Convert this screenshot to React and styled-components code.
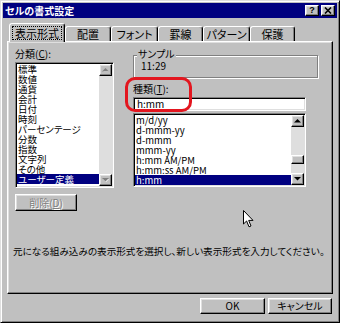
import styled, { createGlobalStyle, css } from "styled-components";

const GlobalStyle = createGlobalStyle`
  html, body {
    margin: 0;
    padding: 0;
    background: #c0c0c0;
  }
  body {
    font-family: "Noto Sans CJK JP", "Noto Sans", sans-serif;
    font-feature-settings: "palt";
    color: #000;
  }
`;

const raised = css`
  border-style: solid;
  border-width: 1px;
  border-color: #fff #000 #000 #fff;
  box-shadow: inset -1px -1px 0 #808080, inset 1px 1px 0 #dfdfdf;
`;

const sunken = css`
  border-style: solid;
  border-width: 1px;
  border-color: #808080 #fff #fff #808080;
  box-shadow: inset 1px 1px 0 #000, inset -1px -1px 0 #dfdfdf;
`;

const Dialog = styled.div`
  position: relative;
  width: 340px;
  height: 323px;
  box-sizing: border-box;
  padding: 2px;
  background: #c0c0c0;
  border-style: solid;
  border-width: 1px;
  border-color: #dfdfdf #000 #000 #dfdfdf;
  box-shadow: inset 1px 1px 0 #fff, inset -1px -1px 0 #808080;
  display: flex;
  flex-direction: column;
`;

const TitleBar = styled.div`
  height: 15px;
  background: #000080;
  display: flex;
  align-items: center;
  padding: 0 2px;
  gap: 1px;
`;

const Title = styled.div`
  flex: 1;
  color: #fff;
  font-size: 10px;
  font-weight: bold;
  line-height: 15px;
  white-space: nowrap;
`;

const CaptionButton = styled.div`
  box-sizing: border-box;
  width: 14px;
  height: 11px;
  background: #c0c0c0;
  ${raised};
  display: flex;
  align-items: center;
  justify-content: center;
  font-family: "Liberation Sans", sans-serif;
  font-size: 9px;
  font-weight: bold;
  line-height: 1;
  margin-left: ${(p) => p.$gap || 0}px;
`;

const TabStrip = styled.div`
  position: relative;
  z-index: 1;
  display: flex;
  align-items: flex-start;
  height: 18px;
  margin: 5px 4px 0;
  padding-left: 2px;
`;

const Tab = styled.div`
  box-sizing: border-box;
  width: ${(p) => p.$w}px;
  height: ${(p) => (p.$active ? 19 : 15)}px;
  margin-top: ${(p) => (p.$active ? 0 : 3)}px;
  background: #c0c0c0;
  border-style: solid;
  border-width: 1px 1px 0 1px;
  border-color: #fff #000 transparent #fff;
  border-radius: 3px 3px 0 0;
  box-shadow: inset -1px 0 0 #808080;
  display: flex;
  align-items: ${(p) => (p.$active ? "flex-start" : "center")};
  justify-content: center;
  padding-top: ${(p) => (p.$active ? 3 : 0)}px;
  font-size: 11px;
  line-height: 12px;
  white-space: nowrap;
`;

const FocusLabel = styled.span`
  outline: 1px dotted #000;
  outline-offset: 0;
  padding: 0 2px;
`;

const Panel = styled.div`
  box-sizing: border-box;
  height: 253px;
  margin: 0 4px;
  padding: 6px 6px 0 7px;
  ${raised};
`;

const Columns = styled.div`
  display: flex;
  gap: 19px;
`;

const Column = styled.div`
  width: ${(p) => p.$w}px;
  display: flex;
  flex-direction: column;
`;

const Label = styled.div`
  height: ${(p) => p.$h || 12}px;
  margin-top: ${(p) => p.$mt || 0}px;
  font-size: 10px;
  line-height: 12px;
  white-space: nowrap;
`;

const ListBox = styled.div`
  box-sizing: border-box;
  width: ${(p) => p.$w}px;
  height: ${(p) => p.$h}px;
  margin-top: ${(p) => p.$mt || 0}px;
  background: #fff;
  ${sunken};
  padding: 1px;
  display: flex;
`;

const Items = styled.div`
  flex: 1;
  overflow: hidden;
  display: flex;
  flex-direction: column;
  padding-top: ${(p) => p.$pt || 0}px;
`;

const Item = styled.div`
  height: 10px;
  flex: none;
  padding-left: 1px;
  font-size: 9.5px;
  line-height: 10px;
  white-space: nowrap;
  background: ${(p) => (p.$sel ? "#000080" : "transparent")};
  color: ${(p) => (p.$sel ? "#fff" : "#000")};
`;

const ScrollBar = styled.div`
  width: 13px;
  display: flex;
  flex-direction: column;
  background: #dedede;
`;

const ArrowButton = styled.div`
  box-sizing: border-box;
  height: 12px;
  background: #c0c0c0;
  ${raised};
  display: flex;
  align-items: center;
  justify-content: center;
`;

const Track = styled.div`
  flex: 1;
  padding-top: ${(p) => p.$thumb || 0}px;
`;

const Thumb = styled.div`
  box-sizing: border-box;
  height: 9px;
  background: #c0c0c0;
  ${raised};
`;

const Button = styled.div`
  box-sizing: border-box;
  width: ${(p) => p.$w}px;
  height: ${(p) => p.$h}px;
  margin-top: ${(p) => p.$mt || 0}px;
  background: #c0c0c0;
  ${raised};
  display: flex;
  align-items: center;
  justify-content: center;
  font-size: 10px;
  line-height: 12px;
  white-space: nowrap;
  color: ${(p) => (p.$disabled ? "#808080" : "#000")};
  text-shadow: ${(p) => (p.$disabled ? "1px 1px 0 #fff" : "none")};
`;

const Group = styled.div`
  box-sizing: border-box;
  height: 23px;
  margin-top: 7px;
  border: 1px solid #808080;
  box-shadow: inset 1px 1px 0 #fff, 1px 1px 0 #fff;
`;

const Legend = styled.div`
  width: fit-content;
  margin: -8px 0 0 3px;
  padding: 0 1px;
  background: #c0c0c0;
  font-size: 10px;
  line-height: 12px;
`;

const SampleValue = styled.div`
  padding-left: 7px;
  font-size: 10px;
  line-height: 12px;
`;

const TextInput = styled.div`
  box-sizing: border-box;
  width: 173px;
  height: 14px;
  margin-top: 2px;
  background: #fff;
  ${sunken};
  padding-left: 3px;
  font-size: 10px;
  line-height: 12px;
`;

const Description = styled.div`
  margin: 34px 0 0 -2px;
  font-size: 9.6px;
  line-height: 12px;
  white-space: nowrap;
`;

const ButtonRow = styled.div`
  display: flex;
  justify-content: flex-end;
  gap: 3px;
  margin: 4px 5px 0 0;
`;

const Annotation = styled.div`
  position: absolute;
  left: 124px;
  top: 76px;
  width: 67px;
  height: 35px;
  box-sizing: border-box;
  border: 3px solid #e3161f;
  border-radius: 10px;
`;

const Pointer = styled.svg`
  position: absolute;
  left: 242px;
  top: 209px;
`;

const Arrow = ({ up, disabled }) => (
  <svg width="7" height="4" viewBox="0 0 7 4">
    {disabled && (
      <polygon
        points={up ? "1,4 4,1 7,4" : "1,1 7,1 4,4"}
        fill="#fff"
      />
    )}
    <polygon
      points={up ? "0,3.5 3.5,0 7,3.5" : "0,0 7,0 3.5,3.5"}
      fill={disabled ? "#808080" : "#000"}
    />
  </svg>
);

const categories = [
  "標準",
  "数値",
  "通貨",
  "会計",
  "日付",
  "時刻",
  "パーセンテージ",
  "分数",
  "指数",
  "文字列",
  "その他",
  "ユーザー定義",
];

const formats = [
  "m/d/yy",
  "d-mmm-yy",
  "d-mmm",
  "mmm-yy",
  "h:mm AM/PM",
  "h:mm:ss AM/PM",
  "h:mm",
];

const tabs = [
  { label: "表示形式", w: 56 },
  { label: "配置", w: 46 },
  { label: "フォント", w: 47 },
  { label: "罫線", w: 45 },
  { label: "パターン", w: 47 },
  { label: "保護", w: 45 },
];

export default function App() {
  return (
    <>
      <GlobalStyle />
      <Dialog>
        <TitleBar>
          <Title>セルの書式設定</Title>
          <CaptionButton>?</CaptionButton>
          <CaptionButton $gap={1}>
            <svg width="8" height="7" viewBox="0 0 8 7">
              <path d="M1 0.5 L7 6.5 M7 0.5 L1 6.5" stroke="#000" strokeWidth="1.6" />
            </svg>
          </CaptionButton>
        </TitleBar>

        <TabStrip>
          {tabs.map((t, i) => (
            <Tab key={t.label} $w={t.w} $active={i === 0}>
              {i === 0 ? <FocusLabel>{t.label}</FocusLabel> : t.label}
            </Tab>
          ))}
        </TabStrip>

        <Panel>
          <Columns>
            <Column $w={99}>
              <Label $h={14}>
                分類(<u>C</u>):
              </Label>
              <ListBox $w={99} $h={126}>
                <Items>
                  {categories.map((c, i) => (
                    <Item key={c} $sel={i === categories.length - 1}>
                      {c}
                    </Item>
                  ))}
                </Items>
                <ScrollBar>
                  <ArrowButton>
                    <Arrow up disabled />
                  </ArrowButton>
                  <Track />
                  <ArrowButton>
                    <Arrow disabled />
                  </ArrowButton>
                </ScrollBar>
              </ListBox>
              <Button $w={62} $h={17} $mt={6} $disabled>
                削除(<u>D</u>)
              </Button>
            </Column>

            <Column $w={185}>
              <Group>
                <Legend>サンプル</Legend>
                <SampleValue>11:29</SampleValue>
              </Group>
              <Label $mt={5}>
                種類(<u>T</u>):
              </Label>
              <TextInput>h:mm</TextInput>
              <ListBox $w={173} $h={74} $mt={2}>
                <Items>
                  {formats.map((f, i) => (
                    <Item key={f} $sel={i === formats.length - 1}>
                      {f}
                    </Item>
                  ))}
                </Items>
                <ScrollBar>
                  <ArrowButton>
                    <Arrow up />
                  </ArrowButton>
                  <Track $thumb={28}>
                    <Thumb />
                  </Track>
                  <ArrowButton>
                    <Arrow />
                  </ArrowButton>
                </ScrollBar>
              </ListBox>
            </Column>
          </Columns>

          <Description>
            元になる組み込みの表示形式を選択し、新しい表示形式を入力してください。
          </Description>
        </Panel>

        <ButtonRow>
          <Button $w={65} $h={16}>OK</Button>
          <Button $w={64} $h={16}>キャンセル</Button>
        </ButtonRow>

        <Annotation />
        <Pointer width="11" height="18" viewBox="0 0 11 18">
          <path
            d="M0.5 0.5 L0.5 14 L3.6 11 L6 16.8 L8 16 L5.7 10.4 L10 10.4 Z"
            fill="#fff"
            stroke="#000"
            strokeWidth="1"
            strokeLinejoin="miter"
          />
        </Pointer>
      </Dialog>
    </>
  );
}
